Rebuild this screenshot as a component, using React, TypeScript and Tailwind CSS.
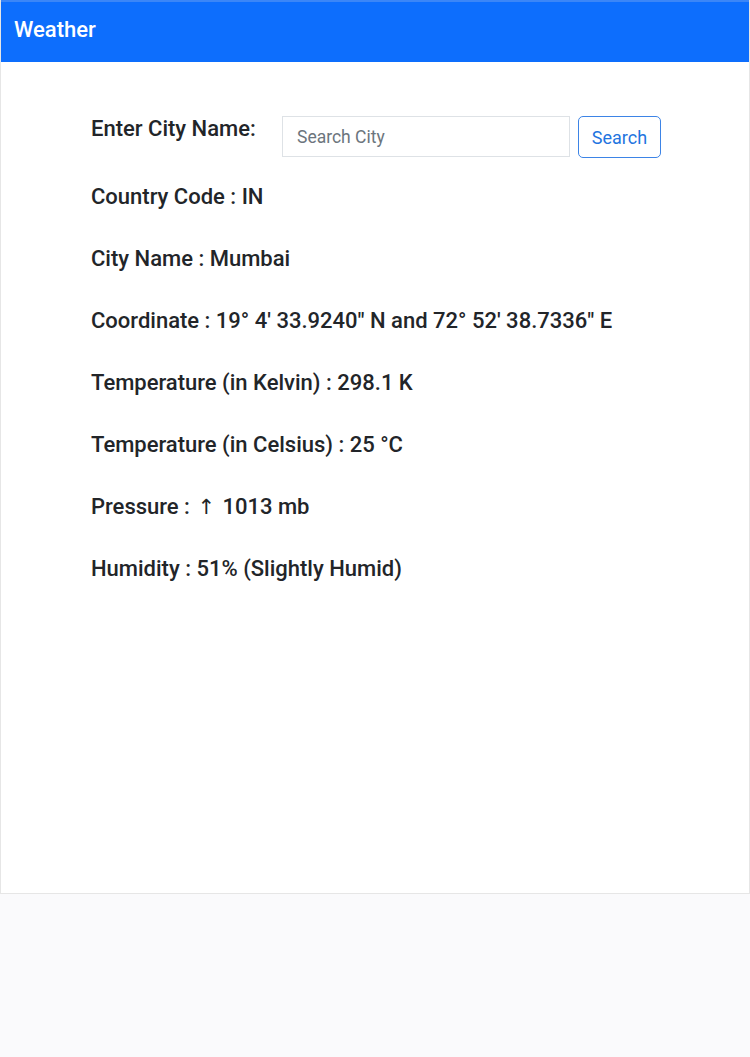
export default function App() {
  const rows: React.ReactNode[] = [
    "Country Code : IN",
    "City Name : Mumbai",
    "Coordinate : 19° 4' 33.9240\" N and 72° 52' 38.7336\" E",
    "Temperature (in Kelvin) : 298.1 K",
    "Temperature (in Celsius) : 25 °C",
    <>
      Pressure :{" "}
      <span className="font-['DejaVu_Sans'] font-normal text-[21px] mx-[2px]">↑</span> 1013 mb
    </>,
    "Humidity : 51% (Slightly Humid)",
  ];

  return (
    <div
      className="min-h-[1057px] bg-[#fafafc]"
      style={{ fontFamily: "Roboto, 'Liberation Sans', sans-serif" }}
    >
      <div className="h-[894px] bg-white border border-[#e6e6e6] border-t-0">
        {/* Header bar */}
        <div className="h-[62px] bg-[#0d6efd] border-t-2 border-[#3b86f7] flex items-center px-[13px] pb-[6px]">
          <span className="text-white text-[22px] font-medium">Weather</span>
        </div>

        <div className="pl-[90px] pt-[54px]">
          <div className="flex items-start">
            <label className="w-[191px] pt-[1px] text-[22px] leading-[24px] text-[#222529] font-medium">
              Enter City Name:
            </label>
            <input
              placeholder="Search City"
              className="w-[288px] h-[41px] border border-[#dee2e6] px-[14px] text-[17.5px] text-[#212529] placeholder:text-[#6c757d] outline-none"
            />
            <button className="ml-[8px] w-[83px] h-[42px] border border-[#3d84e6] rounded-[5px] text-[18px] text-[#1f75e0]">
              Search
            </button>
          </div>

          <div className="mt-[27px] flex flex-col gap-[38px]">
            {rows.map((r, i) => (
              <p key={i} className="text-[22px] leading-[24px] text-[#222529] font-medium whitespace-pre">
                {r}
              </p>
            ))}
          </div>
        </div>
      </div>
    </div>
  );
}
